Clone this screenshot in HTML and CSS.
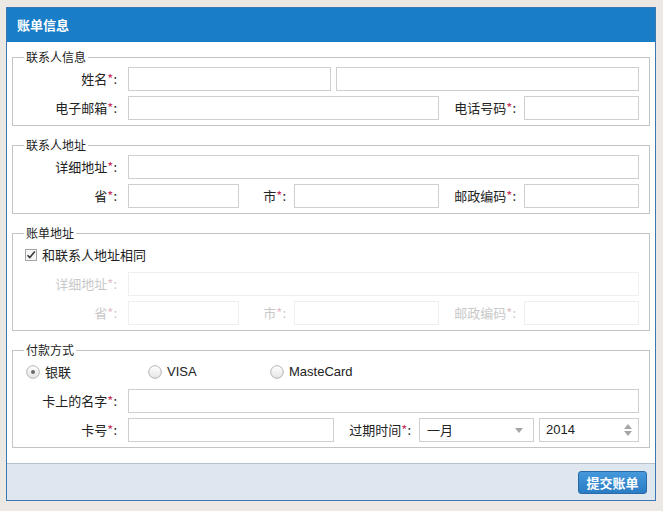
FILE: index.html
```html
<!DOCTYPE html>
<html lang="zh-CN">
<head>
<meta charset="utf-8">
<title>账单信息</title>
<link rel="stylesheet" href="styles.css">
</head>
<body>
<div class="panel">
  <div class="panel-head">账单信息</div>
  <div class="panel-body">
    <fieldset class="group">
      <legend>联系人信息</legend>
      <div class="rows">
        <div class="row">
          <label class="lbl">姓名<span class="req">*</span>:</label>
          <input class="inp w203" type="text">
          <input class="inp w303 ml5" type="text">
        </div>
        <div class="row">
          <label class="lbl">电子邮箱<span class="req">*</span>:</label>
          <input class="inp w311" type="text">
          <label class="lbl2 w77">电话号码<span class="req">*</span>:</label>
          <input class="inp w115" type="text">
        </div>
      </div>
    </fieldset>

    <fieldset class="group">
      <legend>联系人地址</legend>
      <div class="rows">
        <div class="row">
          <label class="lbl">详细地址<span class="req">*</span>:</label>
          <input class="inp w511" type="text">
        </div>
        <div class="row">
          <label class="lbl">省<span class="req">*</span>:</label>
          <input class="inp w111" type="text">
          <label class="lbl2 w47">市<span class="req">*</span>:</label>
          <input class="inp w145" type="text">
          <label class="lbl2 w77">邮政编码<span class="req">*</span>:</label>
          <input class="inp w115" type="text">
        </div>
      </div>
    </fieldset>

    <fieldset class="group">
      <legend>账单地址</legend>
      <div class="rows">
        <div class="row check-row">
          <span class="checkbox">
            <svg width="12" height="12" viewBox="0 0 12 12"><rect x="0.5" y="0.5" width="11" height="11" fill="#f6f6f6" stroke="#a4a4a4"/><path d="M2.5 6.2 L4.8 8.6 L9.8 2.4" fill="none" stroke="#3a3a3a" stroke-width="1.6"/></svg>
          </span>
          <span class="check-text">和联系人地址相同</span>
        </div>
        <div class="row disabled">
          <label class="lbl">详细地址<span class="req">*</span>:</label>
          <input class="inp w511" type="text" disabled>
        </div>
        <div class="row disabled">
          <label class="lbl">省<span class="req">*</span>:</label>
          <input class="inp w111" type="text" disabled>
          <label class="lbl2 w47">市<span class="req">*</span>:</label>
          <input class="inp w145" type="text" disabled>
          <label class="lbl2 w77">邮政编码<span class="req">*</span>:</label>
          <input class="inp w115" type="text" disabled>
        </div>
      </div>
    </fieldset>

    <fieldset class="group">
      <legend>付款方式</legend>
      <div class="rows">
        <div class="row radio-row">
          <span class="radio-item">
            <svg width="14" height="14" viewBox="0 0 14 14"><defs><linearGradient id="rg1" x1="0" y1="0" x2="0" y2="1"><stop offset="0" stop-color="#ffffff"/><stop offset="1" stop-color="#e4e4e4"/></linearGradient></defs><circle cx="7" cy="7" r="6.3" fill="url(#rg1)" stroke="#b3b3b3"/><circle cx="7" cy="7" r="2" fill="#6a6a6a"/></svg>
            <span class="radio-text">银联</span>
          </span>
          <span class="radio-item">
            <svg width="14" height="14" viewBox="0 0 14 14"><defs><linearGradient id="rg2" x1="0" y1="0" x2="0" y2="1"><stop offset="0" stop-color="#ffffff"/><stop offset="1" stop-color="#e4e4e4"/></linearGradient></defs><circle cx="7" cy="7" r="6.3" fill="url(#rg2)" stroke="#b3b3b3"/></svg>
            <span class="radio-text latin">VISA</span>
          </span>
          <span class="radio-item">
            <svg width="14" height="14" viewBox="0 0 14 14"><defs><linearGradient id="rg3" x1="0" y1="0" x2="0" y2="1"><stop offset="0" stop-color="#ffffff"/><stop offset="1" stop-color="#e4e4e4"/></linearGradient></defs><circle cx="7" cy="7" r="6.3" fill="url(#rg3)" stroke="#b3b3b3"/></svg>
            <span class="radio-text latin">MasteCard</span>
          </span>
        </div>
        <div class="row">
          <label class="lbl">卡上的名字<span class="req">*</span>:</label>
          <input class="inp w511" type="text">
        </div>
        <div class="row">
          <label class="lbl">卡号<span class="req">*</span>:</label>
          <input class="inp w206" type="text">
          <label class="lbl2 w77">过期时间<span class="req">*</span>:</label>
          <div class="fake-select w115">
            <span class="fs-text">一月</span>
            <svg class="fs-arrow" width="8" height="5" viewBox="0 0 8 5"><path d="M0 0 H8 L4 5 Z" fill="#a6a6a6"/></svg>
          </div>
          <div class="fake-spin w100 ml5">
            <span class="fs-text latin">2014</span>
            <svg class="sp-arrows" width="8" height="12" viewBox="0 0 8 12"><path d="M0 5 L4 0 L8 5 Z" fill="#a6a6a6"/><path d="M0 7 H8 L4 12 Z" fill="#a6a6a6"/></svg>
          </div>
        </div>
      </div>
    </fieldset>
  </div>
  <div class="panel-foot">
    <button class="btn" type="button">提交账单</button>
  </div>
</div>
</body>
</html>
```

FILE: styles.css
```css
html, body {
  margin: 0;
  padding: 0;
}
body {
  width: 663px;
  height: 511px;
  background: #ece9e5;
  font-family: "Noto Sans CJK SC", "Liberation Sans", sans-serif;
  font-size: 13px;
  color: #222;
  overflow: hidden;
}
.panel {
  box-sizing: border-box;
  width: 650px;
  height: 494px;
  margin: 7px 0 0 6px;
  border: 1px solid #3b78b3;
  background: #fff;
  display: flex;
  flex-direction: column;
}
.panel-head {
  height: 34px;
  background: #1a7dc8;
  color: #fff;
  font-weight: bold;
  font-size: 13px;
  line-height: 34px;
  padding-left: 10px;
}
.panel-body {
  padding: 7px 5px 0 5px;
}
.group {
  margin: 0 0 11px 0;
  padding: 2px 10px 5px 0;
  border: 1px solid #c4c4c4;
  min-width: 0;
}
.group legend {
  font-size: 12px;
  line-height: 16px;
  padding: 0 2px;
  margin-left: 11px;
  color: #222;
}
.rows {
  display: flex;
  flex-direction: column;
  gap: 5px;
}
.row {
  display: flex;
  align-items: center;
  height: 24px;
}
.lbl {
  width: 104px;
  margin-right: 11px;
  text-align: right;
  white-space: nowrap;
  line-height: 16px;
}
.lbl2 {
  margin-right: 8px;
  text-align: right;
  white-space: nowrap;
  line-height: 16px;
}
.req {
  color: #c8335a;
}
.inp {
  box-sizing: border-box;
  height: 24px;
  border: 1px solid #cfcfcf;
  background: #fff;
  margin: 0;
  padding: 0 4px;
  font: inherit;
  outline: none;
}
.disabled {
  color: #c9c9c9;
}
.disabled .req {
  color: #e2c0c9;
}
.disabled .inp {
  border-color: #efefef;
}
.w47 { width: 47px; }
.w77 { width: 77px; }
.w100 { width: 100px; }
.w111 { width: 111px; }
.w115 { width: 115px; }
.w145 { width: 145px; }
.w203 { width: 203px; }
.w206 { width: 206px; }
.w303 { width: 303px; }
.w311 { width: 311px; }
.w511 { width: 511px; }
.ml5 { margin-left: 5px; }

.check-row {
  padding-left: 12px;
}
.checkbox {
  display: flex;
  width: 12px;
  height: 12px;
  margin-right: 5px;
}
.check-text {
  line-height: 16px;
}
.radio-row {
  padding-left: 13px;
}
.radio-item {
  display: flex;
  align-items: center;
  width: 122px;
}
.radio-item svg {
  flex: none;
  margin-right: 5px;
}
.radio-text {
  line-height: 16px;
}
.latin {
  font-family: "Liberation Sans", Arial, sans-serif;
  font-size: 13px;
}
.fake-select, .fake-spin {
  box-sizing: border-box;
  height: 24px;
  border: 1px solid #cfcfcf;
  background: #fff;
  display: flex;
  align-items: center;
  justify-content: space-between;
  padding: 0 10px 0 7px;
}
.fake-spin {
  padding: 0 6px 0 6px;
}
.fs-text {
  line-height: 16px;
}
.panel-foot {
  margin-top: auto;
  height: 36px;
  border-top: 1px solid #b9c1c9;
  background: #dee7ef;
  display: flex;
  align-items: center;
  justify-content: flex-end;
  padding-right: 8px;
}
.btn {
  box-sizing: border-box;
  width: 69px;
  height: 23px;
  margin-top: 1px;
  border: 1px solid #2a6aa6;
  border-radius: 3px;
  background: linear-gradient(#4698db, #2a7cc4);
  color: #fff;
  font-family: "Noto Sans CJK SC", sans-serif;
  font-weight: bold;
  font-size: 13px;
  line-height: 20px;
  padding: 0;
}
```
